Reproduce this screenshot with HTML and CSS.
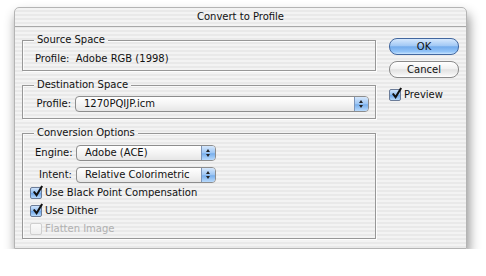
FILE: index.html
```html
<!DOCTYPE html>
<html lang="en">
<head>
    <meta charset="UTF-8">
    <title>Convert to Profile</title>
    <link rel="stylesheet" href="styles.css">
</head>
<body>
  <div class="window">
    <div class="titlebar">Convert to Profile</div>
    <div class="content">
      <div class="left">
        <section class="group source">
          <h2 class="caption">Source Space</h2>
          <div class="line">Profile:&nbsp; Adobe RGB (1998)</div>
        </section>

        <section class="group dest">
          <h2 class="caption">Destination Space</h2>
          <div class="row">
            <span class="label">Profile:</span>
            <div class="popup wide"><span>1270PQIJP.icm</span><i class="arrows"></i></div>
          </div>
        </section>

        <section class="group options">
          <h2 class="caption">Conversion Options</h2>
          <div class="row">
            <span class="label">Engine:</span>
            <div class="popup"><span>Adobe (ACE)</span><i class="arrows"></i></div>
          </div>
          <div class="row">
            <span class="label">Intent:</span>
            <div class="popup"><span>Relative Colorimetric</span><i class="arrows"></i></div>
          </div>
          <label class="check on"><span class="box"><svg viewBox="0 0 14 14"><path d="M3 7 L6 11 L12 1" /></svg></span>Use Black Point Compensation</label>
          <label class="check on"><span class="box"><svg viewBox="0 0 14 14"><path d="M3 7 L6 11 L12 1" /></svg></span>Use Dither</label>
          <label class="check off"><span class="box"></span>Flatten Image</label>
        </section>
      </div>

      <div class="right">
        <div class="btn ok">OK</div>
        <div class="btn cancel">Cancel</div>
        <label class="check on preview"><span class="box"><svg viewBox="0 0 14 14"><path d="M3 7 L6 11 L12 1" /></svg></span>Preview</label>
      </div>
    </div>
  </div>
</body>
</html>
```

FILE: styles.css
```css
body {
  margin: 0;
  background: #ffffff;
  font-family: "DejaVu Sans", sans-serif;
  font-size: 10px;
  line-height: 12px;
  color: #111;
}

.window {
  width: 451px;
  height: 240px;
  margin: 7px 0 0 14px;
  border: 1px solid #b4b4b4;
  border-radius: 5px 5px 0 0;
  background: repeating-linear-gradient(#f3f3f3 0 2px, #e9e9e9 2px 4px) fixed;
  box-shadow: 2px 7px 12px rgba(0, 0, 0, 0.45);
}

.titlebar {
  height: 18px;
  line-height: 18px;
  text-align: center;
  border-bottom: 1px solid #a8a8a8;
  color: #111;
}

.content {
  display: flex;
  align-items: flex-start;
  gap: 13px;
  padding: 13px 7px 0 7px;
}

.left {
  width: 354px;
  display: flex;
  flex-direction: column;
  gap: 14px;
}

.group {
  position: relative;
  border: 1px solid #979797;
  box-shadow: 1px 1px 0 rgba(255, 255, 255, 0.9), inset 1px 1px 0 rgba(255, 255, 255, 0.7);
  padding: 0 7px 0 12px;
}

/* caption sits on the top border, stripes line up via fixed background */
.caption {
  position: absolute;
  top: -7px;
  left: 11px;
  margin: 0;
  padding: 0 3px;
  font-size: 10px;
  font-weight: normal;
  line-height: 12px;
  background: repeating-linear-gradient(#f3f3f3 0 2px, #e9e9e9 2px 4px) fixed;
}

.source {
  padding-top: 12px;
  padding-bottom: 5px;
}

.dest {
  padding-top: 10px;
  padding-bottom: 6px;
}

.options {
  padding-top: 11px;
  padding-bottom: 0;
}

.row {
  display: flex;
  align-items: center;
  gap: 4px;
  height: 16px;
}

.options .row + .row {
  margin-top: 6px;
}

.label {
  width: 36px;
  text-align: right;
  flex: none;
}

.options .label {
  width: 37px;
}

.popup {
  position: relative;
  width: 130px;
  height: 14px;
  border: 1px solid #8d8d8d;
  border-radius: 4px;
  background: linear-gradient(#ffffff, #f4f4f4 50%, #e6e6e6);
  display: flex;
  align-items: center;
  padding-left: 8px;
  flex: none;
}

.popup.wide {
  width: 284px;
}

.arrows {
  position: absolute;
  right: 0;
  top: 0;
  width: 13px;
  height: 14px;
  border-left: 1px solid #7d95b8;
  border-radius: 0 3px 3px 0;
  background: linear-gradient(#d5e7fc, #9cc5f3 50%, #78afec 55%, #b9dafc);
}

.arrows::before,
.arrows::after {
  content: "";
  position: absolute;
  left: 4px;
  border-left: 2.5px solid transparent;
  border-right: 2.5px solid transparent;
}

.arrows::before {
  top: 3px;
  border-bottom: 3px solid #222;
}

.arrows::after {
  top: 8px;
  border-top: 3px solid #222;
}

.check {
  display: flex;
  align-items: center;
  gap: 3px;
  height: 18px;
  margin-left: -5px;
}

.options .row + .check {
  margin-top: 1px;
}

.box {
  position: relative;
  width: 10px;
  height: 10px;
  border: 1px solid #6b7c98;
  border-radius: 2px;
  background: linear-gradient(#cfe3fb, #8fbdf1 50%, #6fa7ea 55%, #b7d9fb);
  flex: none;
}

.box svg {
  position: absolute;
  left: 0;
  top: -3px;
  width: 13px;
  height: 13px;
  fill: none;
  stroke: #111;
  stroke-width: 2.2;
}

.check.off {
  color: #b0b0b0;
}

.check.off .box {
  border-color: #cfcfcf;
  background: linear-gradient(#fafafa, #eeeeee);
}

.right {
  width: 70px;
  padding-top: 4px;
  margin-top: -6px;
  display: flex;
  flex-direction: column;
}

.btn {
  height: 15px;
  line-height: 15px;
  text-align: center;
  border-radius: 8px;
}

.ok {
  border: 1px solid #42679f;
  background: linear-gradient(#d6e8fd, #a2c9f5 45%, #74acec 52%, #93c4f8 85%, #cbe6ff);
}

.cancel {
  margin-top: 6px;
  border: 1px solid #8a8a8a;
  background: linear-gradient(#ffffff, #f1f1f1 45%, #e2e2e2 52%, #f3f3f3 85%, #ffffff);
}

.preview {
  margin-left: 0;
  margin-top: 8px;
}
```
